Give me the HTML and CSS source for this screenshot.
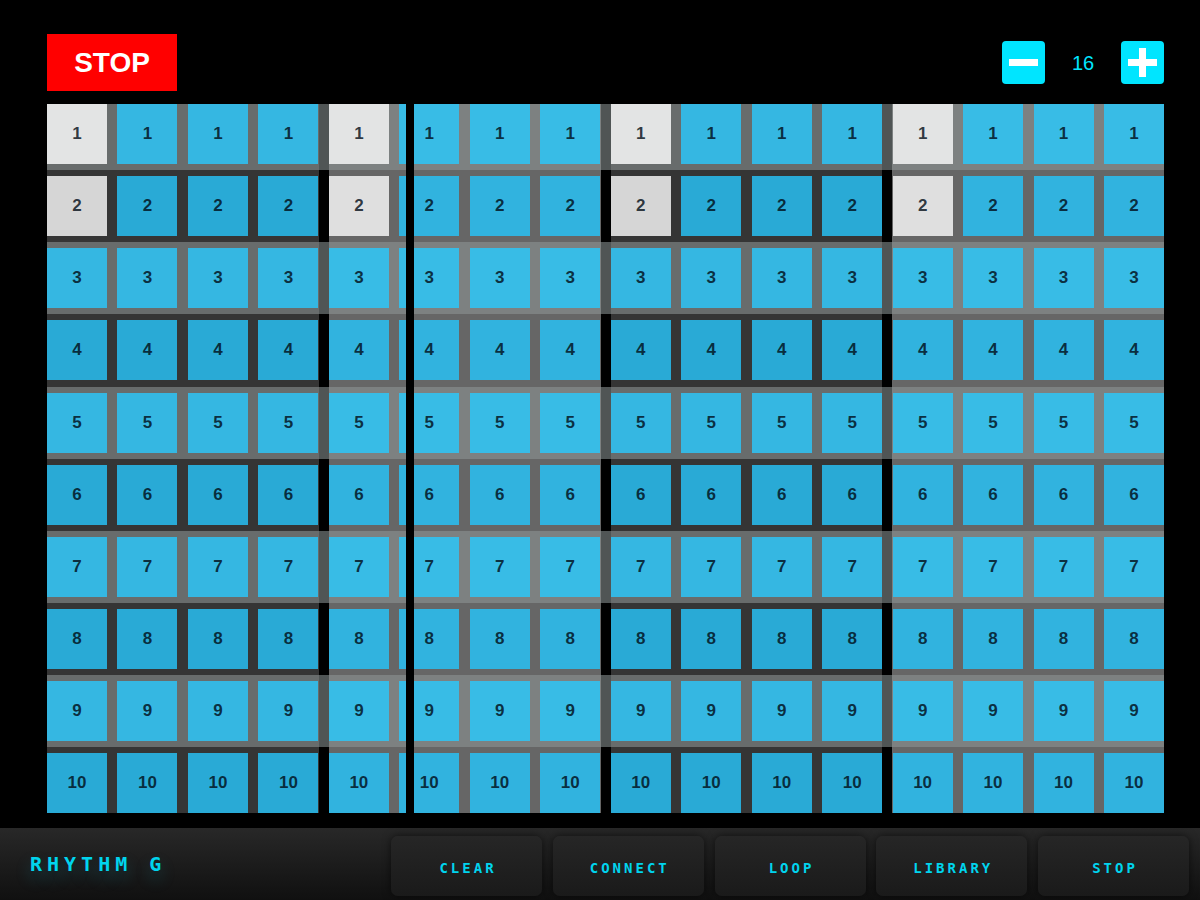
FILE: index.html
```html
<!DOCTYPE html>
<html>
<head>
	<title>Rhythm G</title>
	<meta name="viewport" content="width=device-width, initial-scale=1">
	<link rel="stylesheet" href="styles.css">
</head>
<body>
	<div class="top-bar">
		<button class="stop-btn">STOP</button>
		<div class="steps-ctrl">
			<button class="step-btn" id="less">
				<svg width="43" height="43" viewBox="0 0 43 43"><rect x="7" y="18" width="29" height="7" fill="#fff"/></svg>
			</button>
			<span class="step-count" id="count">16</span>
			<button class="step-btn" id="more">
				<svg width="43" height="43" viewBox="0 0 43 43"><rect x="7" y="18" width="29" height="7" fill="#fff"/><rect x="18" y="7" width="7" height="29" fill="#fff"/></svg>
			</button>
		</div>
	</div>

	<div class="grid">
		<div class="tracks" id="tracks"></div>
		<div class="playhead"></div>
	</div>

	<div class="footer">
		<span class="logo">RHYTHM G</span>
		<div class="menu">
			<button class="menu-btn">CLEAR</button>
			<button class="menu-btn">CONNECT</button>
			<button class="menu-btn">LOOP</button>
			<button class="menu-btn">LIBRARY</button>
			<button class="menu-btn">STOP</button>
		</div>
	</div>

	<script>
		const tracks = document.getElementById('tracks');
		// steps that are switched on, per track
		const pattern = {
			1: [0, 4, 8, 12],
			2: [0, 4, 8, 12]
		};

		for (let t = 1; t <= 10; t++) {
			const row = document.createElement('div');
			row.className = 'row ' + (t % 2 ? 'odd' : 'even');
			for (let g = 0; g < 4; g++) {
				const group = document.createElement('div');
				group.className = 'group' + (g % 2 ? '' : ' dark');
				for (let s = 0; s < 4; s++) {
					const slot = document.createElement('div');
					slot.className = 'slot';
					const cell = document.createElement('div');
					cell.className = 'cell';
					if ((pattern[t] || []).includes(g * 4 + s)) cell.classList.add('on');
					cell.textContent = t;
					cell.addEventListener('click', () => cell.classList.toggle('on'));
					slot.appendChild(cell);
					group.appendChild(slot);
				}
				row.appendChild(group);
			}
			tracks.appendChild(row);
		}
	</script>
</body>
</html>
```

FILE: styles.css
```css
body {
	margin: 0;
	padding: 0;
	background-color: #000;
	font-family: "Liberation Sans", Arial, sans-serif;
	height: 900px;
	overflow: hidden;
}
button {
	border: none;
	padding: 0;
	cursor: pointer;
	font-family: inherit;
}

/* top bar */
.top-bar {
	display: flex;
	justify-content: space-between;
	align-items: center;
	height: 57px;
	padding: 34px 36px 0 47px;
}
.stop-btn {
	width: 130px;
	height: 57px;
	background-color: #ff0000;
	color: #fff;
	font-size: 28px;
	font-weight: bold;
}
.steps-ctrl {
	display: flex;
	align-items: center;
}
.step-btn {
	width: 43px;
	height: 43px;
	border-radius: 4px;
	background-color: #00e5ff;
	display: flex;
}
.step-count {
	width: 76px;
	text-align: center;
	color: #00e5ff;
	font-size: 20px;
	padding-top: 2px;
}

/* sequencer grid */
.grid {
	position: relative;
	width: 1117px;
	height: 709px;
	margin: 13px 0 0 47px;
	overflow: hidden;
}
.tracks {
	width: 1127.5px;
	margin: -6px 0 0 -5.25px;
}
.row {
	display: flex;
	height: 72.15px;
}
.row.odd { --sep: #505555; --band: #7d8181; --cell: #38bce6; }
.row.odd .group.dark { --band: #686c6c; --cell: #35b7e2; }
.row.even { --sep: #000; --band: #666; --cell: #31b3df; }
.row.even .group.dark { --band: #353535; --cell: #29aad6; }
.group {
	flex: 1;
	display: flex;
	background: linear-gradient(to right,
		var(--sep) 5.25px, var(--band) 5.25px,
		var(--band) calc(100% - 5.25px), var(--sep) calc(100% - 5.25px));
}
.slot {
	flex: 1;
	display: flex;
	align-items: center;
	justify-content: center;
}
.cell {
	width: 60px;
	height: 60px;
	display: flex;
	align-items: center;
	justify-content: center;
	background-color: var(--cell);
	color: rgba(0, 10, 20, 0.8);
	font-size: 17px;
	font-weight: bold;
	cursor: pointer;
}
.row.odd .cell.on { background-color: #e3e4e4; }
.row.even .cell.on { background-color: #dfdfdf; }
.row.even .group.dark .cell.on { background-color: #d6d6d6; }
.playhead {
	position: absolute;
	top: 0;
	bottom: 0;
	left: 359px;
	width: 8px;
	background-color: #000;
}

/* footer */
.footer {
	display: flex;
	justify-content: space-between;
	align-items: center;
	height: 72px;
	margin-top: 15px;
	padding: 0 11px 0 30px;
	background: linear-gradient(#282828, #101010);
}
.logo,
.menu-btn {
	font-family: "DejaVu Sans Mono", monospace;
	font-weight: bold;
	color: #00d4ee;
}
.logo {
	font-size: 20px;
	letter-spacing: 5px;
	text-shadow: 0 8px 16px rgba(0, 200, 230, 0.25);
}
.menu {
	display: flex;
	gap: 10.75px;
	padding-top: 4px;
}
.menu-btn {
	width: 151px;
	height: 60px;
	border-radius: 7px;
	background: linear-gradient(#262626, #1a1a1a);
	box-shadow: 0 0 8px rgba(0, 0, 0, 0.6);
	font-size: 14px;
	letter-spacing: 3px;
	padding: 4px 0 0 3px;
}
```
